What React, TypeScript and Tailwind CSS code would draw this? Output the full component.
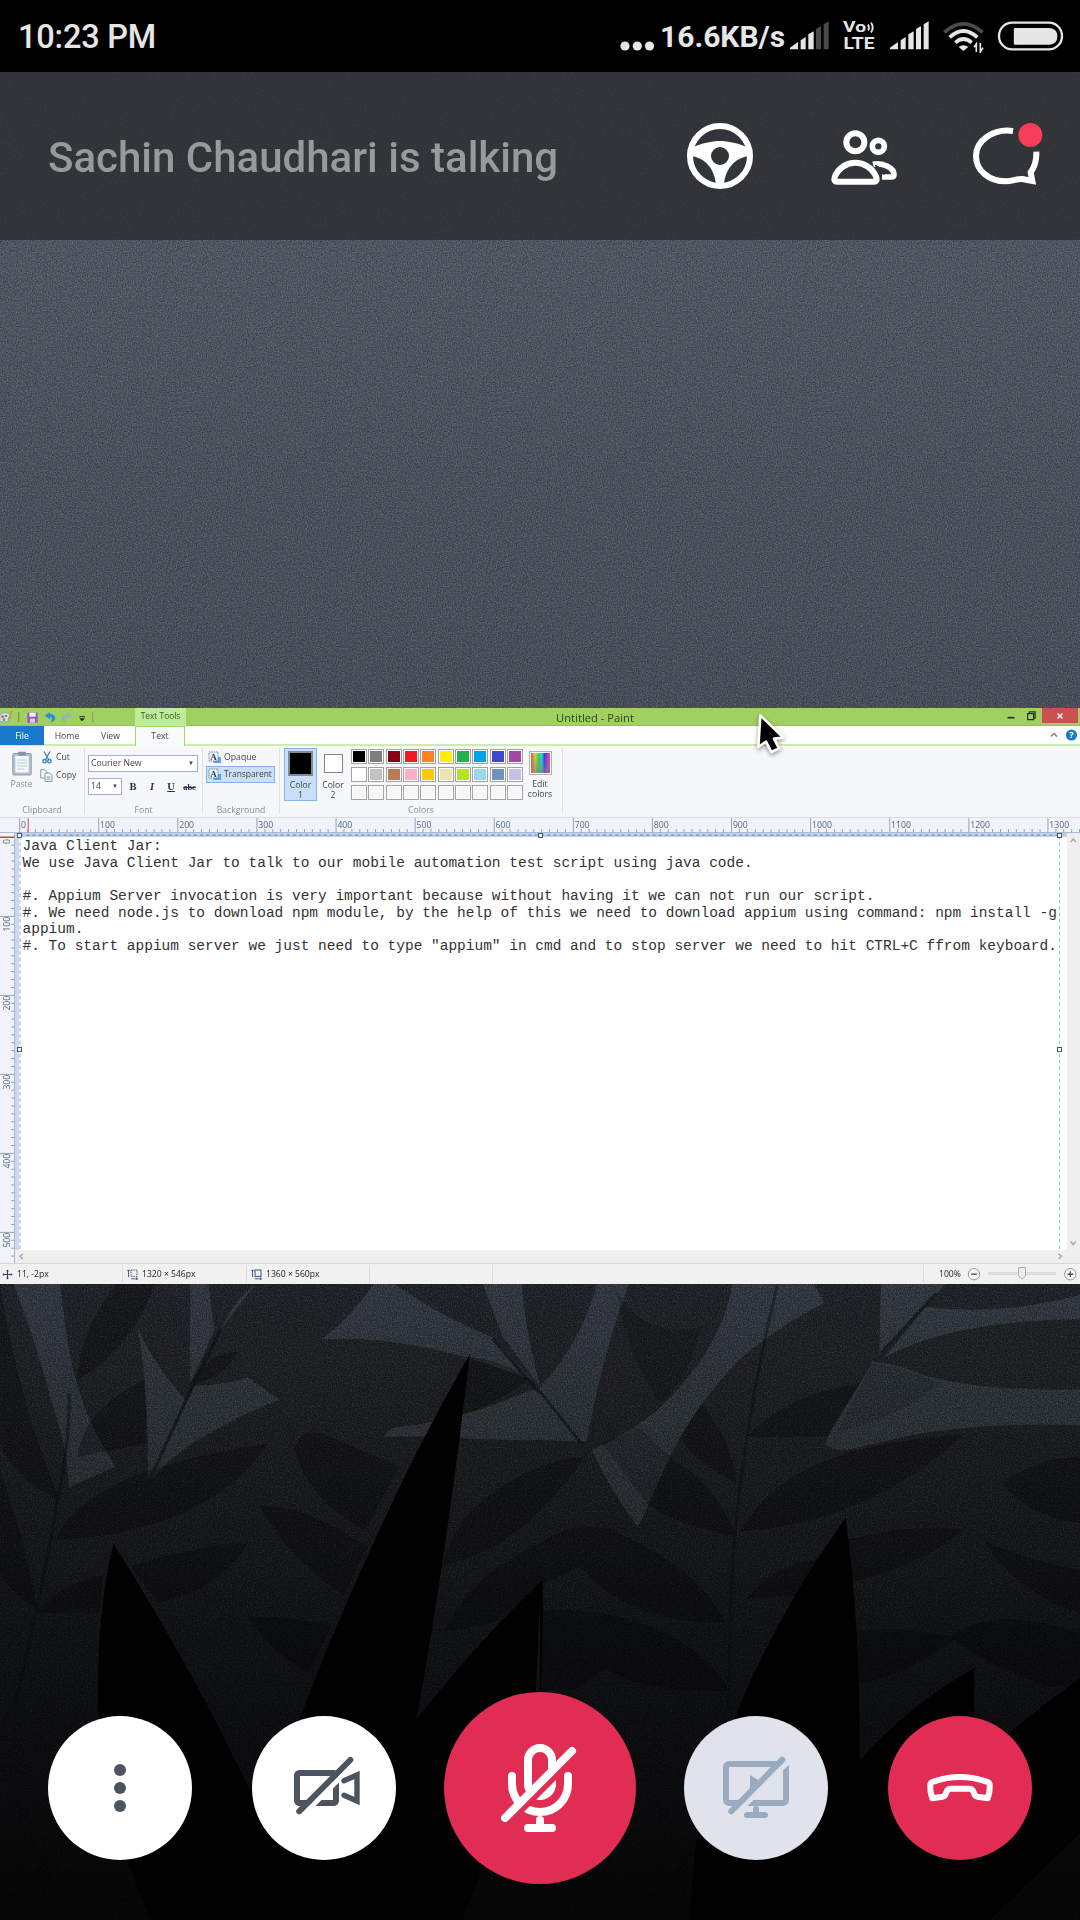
import React from 'react';

const UI = "font-['Open_Sans','Noto_Sans',sans-serif]";

/* ---------- status bar ---------- */

function Signal({ dim }: { dim?: boolean }) {
  const weak = dim ? '#4a4a4a' : '#e6e6e6';
  return (
    <svg className="h-[30px] w-[41px]" viewBox="570 62 123 90">
      <g fill="#e6e6e6">
        <path d="M573 147 L573 142 L597 125 V147Z" />
        <path d="M605 147 V120 L620 110 V147Z" />
        <path d="M628 147 V102 L644 93 V147Z" />
        <path d="M651 147 V86 L666 77 V147Z" fill={weak} />
        <path d="M674 147 V72 L689 63 V147Z" fill={weak} />
      </g>
    </svg>
  );
}

function StatusBar() {
  return (
    <div className="flex h-[72px] items-center justify-between bg-black pl-[18px] pr-4 font-['Roboto',sans-serif] text-[#e6e6e6]">
      <span className="mt-[2px] text-[32.5px] leading-none font-medium tracking-[-0.2px]">10:23 PM</span>
      <div className="flex items-center">
        <svg className="mt-[19px] mr-[5px] h-[10px] w-[35px]" viewBox="0 0 35 10" fill="#e6e6e6">
          <circle cx="5" cy="5" r="4.6" />
          <circle cx="17.3" cy="5" r="4.6" />
          <circle cx="29.5" cy="5" r="4.6" />
        </svg>
        <span className="mt-[2px] mr-[5px] w-[124px] text-[30px] leading-none font-bold whitespace-nowrap">16.6KB/s</span>
        <Signal dim />
        <svg className="ml-[13px] h-[38px] w-[34px]" viewBox="0 -4 34 38" fill="#e6e6e6">
          <text x="0" y="11.4" fontFamily="Roboto" fontWeight="700" fontSize="15.5" textLength="23" lengthAdjust="spacingAndGlyphs">Vo</text>
          <text x="0.5" y="28.4" fontFamily="Roboto" fontWeight="700" fontSize="17" textLength="31" lengthAdjust="spacingAndGlyphs">LTE</text>
          <path d="M25 3.5 q2 3 0 6 M28 1.5 q3.4 5 0 10" fill="none" stroke="#e6e6e6" strokeWidth="1.8" />
        </svg>
        <span className="ml-[12px] flex"><Signal /></span>
        <svg className="ml-[13px] h-[33px] w-[41px]" viewBox="1030 60 123 99" fill="none" stroke="#e6e6e6" strokeWidth="11">
          <path d="M1034 97 Q1091 46 1149 97" stroke="#4a4a4a" />
          <path d="M1050 112 Q1091 74 1133 112" />
          <path d="M1067 128 Q1091 106 1116 128" />
          <path d="M1077 141 Q1091 130 1106 141 L1091 153Z" fill="#e6e6e6" stroke="none" />
          <path d="M1130 156 V132 L1123 142 M1142 129 V156 L1150 143" strokeWidth="5" />
        </svg>
        <svg className="ml-[13px] h-[30px] w-[67px]" viewBox="1192 63 201 91">
          <rect x="1197" y="68" width="191" height="81" rx="40" fill="none" stroke="#e6e6e6" strokeWidth="7" />
          <path d="M1242 88 Q1242 84 1246 84 H1350 Q1374 86 1374 109 Q1374 133 1350 135 H1246 Q1242 135 1242 131Z" fill="#e6e6e6" />
        </svg>
      </div>
    </div>
  );
}

/* ---------- call header ---------- */

function CallHeader() {
  return (
    <div className="flex h-[168px] items-center bg-[#282a2b]/75 pr-[37px] pl-[48px]">
      <span className="mt-1 flex-1 font-['Roboto',sans-serif] text-[42px] leading-none font-medium whitespace-nowrap text-[#98999b]">
        Sachin Chaudhari is talking
      </span>
      <svg className="h-[68px] w-[68px]" viewBox="-34 -34 68 68" fill="white">
        <circle r="30" fill="none" stroke="white" strokeWidth="6" />
        <path fillRule="evenodd" d="M-29 -8 C-18 -13 -8 -15 0 -15 S18 -13 29 -8 V0 C14 2 5 14 4 29 H-4 C-5 14 -14 2 -29 0Z M9 0 A9 9 0 1 0 -9 0 A9 9 0 1 0 9 0Z" />
      </svg>
      <svg className="ml-[76px] h-[68px] w-[68px]" viewBox="690 366 204 204" fill="none" stroke="white" strokeWidth="18">
        <circle cx="766" cy="427" r="27" />
        <circle cx="835" cy="439" r="18" strokeWidth="17" />
        <path d="M712 545 H821 Q833 545 829 532 C818 503 790 488 766 488 C742 488 714 503 704 532 Q700 545 712 545Z" />
        <path d="M819 493 C850 486 882 505 882 523 Q882 531 874 531 H846" strokeWidth="17" />
        <path d="M825 496 C840 504 850 516 852 524" strokeWidth="5" stroke="#323539" />
      </svg>
      <svg className="ml-[74px] h-[68px] w-[71px]" viewBox="1117 366 213 204" fill="none" stroke="white" strokeWidth="18">
        <path d="M1240 393 C1180 385 1129 422 1129 468 C1129 512 1168 544 1218 544 C1240 544 1254 535 1268 537 L1298 543 L1293 517 C1306 499 1311 480 1310 455" />
        <circle cx="1292" cy="405" r="36" fill="#f63d5a" stroke="none" />
      </svg>
    </div>
  );
}

/* ---------- shared Paint window ---------- */

function TitleBar() {
  return (
    <div className="flex h-[18px] border-b border-[#93c157] bg-[#a1d062]">
      <svg className="h-[18px] w-[135px]" viewBox="0 0 405 54">
        <g transform="translate(0 -24)">
          <path d="M0 44 Q15 32 30 44 Q36 60 22 65 H0Z" fill="#d8e6ef" stroke="#7d97a8" strokeWidth="2" />
          <circle cx="8" cy="50" r="4" fill="#d9534a" /><circle cx="18" cy="48" r="4" fill="#3e8ccc" /><circle cx="12" cy="59" r="4" fill="#47a15c" />
          <path d="M36 33 L24 62" stroke="#e08a3a" strokeWidth="5" />
          <path d="M56 37 V66" stroke="#6a8b3d" strokeWidth="3" />
          <rect x="82" y="38" width="31" height="30" fill="#8b5fb8" /><rect x="88" y="38" width="19" height="12" fill="#f1ecf6" /><rect x="90" y="56" width="15" height="12" fill="#d9cbe8" />
          <path d="M150 36 L134 47 L150 58 V51 Q160 52 152 68 Q176 58 160 44 Q156 41 150 42Z" fill="#2a8fd8" />
          <path d="M200 36 L216 47 L200 58 V51 Q190 52 198 68 Q174 58 190 44 Q194 41 200 42Z" fill="#8fb8a5" />
          <path d="M238 50 H255" stroke="#222" strokeWidth="3" /><path d="M238 55 H255 L246 64Z" fill="#222" />
          <path d="M278 37 V66" stroke="#6a8b3d" strokeWidth="2" />
        </g>
      </svg>
      <div className="h-[19px] w-[51px] bg-[#beed98] text-center text-[8.4px] leading-[16px] whitespace-nowrap text-[#3d5425]">Text Tools</div>
      <div className="flex-1 text-center text-[11.2px] leading-[19px] whitespace-nowrap text-[#32401f]">
        <span className="pl-[4px]">Untitled - Paint</span>
      </div>
      <svg className="h-[18px] w-[42px]" viewBox="0 0 42 18" fill="none" stroke="#26331a" strokeWidth="1.2">
        <path d="M7.5 9.7 H14.5" strokeWidth="1.6" />
        <path d="M27.6 5.6 h6 v6 h-6z M29.4 5.4 V3.8 H35.2 V9.8 H33.6" />
      </svg>
      <div className="flex h-[15px] w-[36px] items-center justify-center bg-[#ca5150]">
        <svg className="h-[6px] w-[6px]" viewBox="0 0 6 6" stroke="white" strokeWidth="1.4"><path d="M.5 .5 L5.5 5.5 M5.5 .5 L.5 5.5" /></svg>
      </div>
      <div className="w-[2px]" />
    </div>
  );
}

function TabRow() {
  return (
    <div className="flex h-[20px] border-b-2 border-[#c8f0ab] bg-white text-[8.7px] leading-[20px] text-[#444]">
      <div className="h-[19px] w-[44px] bg-[#1979ca] text-center text-white">File</div>
      <div className="w-[46px] text-center">Home</div>
      <div className="w-[45px] pr-1 text-center">View</div>
      <div className="h-[20px] w-[50px] border-x border-t border-[#9be065] bg-[#f7f9fb] text-center leading-[18px]">Text</div>
      <div className="flex-1" />
      <svg className="h-[18px] w-[32px]" viewBox="0 0 32 18" fill="none">
        <path d="M3 10.5 L6 7.5 L9 10.5" stroke="#777" strokeWidth="1.3" />
        <circle cx="23.5" cy="9" r="5.6" fill="#1979ca" />
        <text x="23.5" y="12.4" textAnchor="middle" fontSize="9.5" fontWeight="700" fill="white">?</text>
      </svg>
    </div>
  );
}

function Group({ label, className, children }: { label: string; className: string; children: React.ReactNode }) {
  return (
    <div className={`relative flex flex-col ${className}`}>
      <div className="h-[57px]">{children}</div>
      <div className="pr-[1px] text-center text-[8.7px] leading-[14px] text-[#8a8d91]">{label}</div>
      <div className="absolute top-[2px] right-0 h-[66px] w-px bg-[#dfe2e6]" />
    </div>
  );
}

function PatternIcon() {
  return (
    <svg className="h-[13px] w-[14px]" viewBox="0 0 14 13">
      <path d="M7 6 H13 V12 H5Z" fill="#58a7ea" />
      <rect x="1" y="1" width="9" height="9" fill="#eef4fa" stroke="#4b6076" strokeWidth=".8" strokeDasharray="1.4 1" />
      <text x="5.4" y="9" fontSize="9" fontWeight="700" fontFamily="Liberation Serif" textAnchor="middle" fill="#1f3550">A</text>
    </svg>
  );
}

const PALETTE = [
  ['#000000', '#7f7f7f', '#880015', '#ed1c24', '#ff7f27', '#fff200', '#22b14c', '#00a2e8', '#3f48cc', '#a349a4'],
  ['#ffffff', '#c3c3c3', '#b97a57', '#ffaec9', '#ffc90e', '#efe4b0', '#b5e61d', '#99d9ea', '#7092be', '#c8bfe7'],
  ['#f6f7f9', '#f6f7f9', '#f6f7f9', '#f6f7f9', '#f6f7f9', '#f6f7f9', '#f6f7f9', '#f6f7f9', '#f6f7f9', '#f6f7f9'],
];

function Ribbon() {
  return (
    <div className="flex h-[72px] border-b border-[#dadde2] bg-[#f5f7f9] text-[8.7px] text-[#444]">
      <Group label="Clipboard" className="w-[85px]">
        <div className="flex">
          <div className="flex w-[40px] flex-col items-center pt-[5px] pl-[3px] leading-[14px] text-[#8b8e92]">
            <svg className="h-[25px] w-[20px]" viewBox="0 0 20 25">
              <rect x=".8" y="2.5" width="18.4" height="21.5" rx="1" fill="#b3bfcd" stroke="#8f9db0" />
              <rect x="3.3" y="5" width="13.4" height="16.5" fill="#f3f6fa" />
              <path d="M5 9 H15 M5 12 H15 M5 15 H15 M5 18 H12" stroke="#c3ccd7" />
              <rect x="6" y=".8" width="8" height="4" rx="1" fill="#8593a6" />
            </svg>
            <span className="mt-px">Paste</span>
          </div>
          <div className="flex flex-col pt-[3px] leading-[15px]">
            <div className="flex h-[17px] items-center">
              <svg className="mr-[3px] ml-[1px] h-[13px] w-[12px]" viewBox="0 0 12 13" fill="none">
                <path d="M3 0.5 L7.5 8.5 M9 0.5 L4.5 8.5" stroke="#6d8297" strokeWidth="1.4" />
                <circle cx="3.6" cy="10.2" r="1.7" stroke="#2d86c9" strokeWidth="1.4" /><circle cx="8.4" cy="10.2" r="1.7" stroke="#2d86c9" strokeWidth="1.4" />
              </svg>
              Cut
            </div>
            <div className="flex h-[18px] items-center">
              <svg className="mr-[3px] h-[13px] w-[13px]" viewBox="0 0 13 13" fill="#f8fafc" stroke="#7c8c9e" strokeWidth=".9">
                <path d="M.8 .8 H5 L7 2.8 V9 H.8Z" /><path d="M5 4 H9.5 L12 6.5 V12.4 H5Z" /><path d="M6.6 8 H10.4 M6.6 10 H10.4" stroke="#4b91cf" />
              </svg>
              Copy
            </div>
          </div>
        </div>
      </Group>
      <Group label="Font" className="w-[118px]">
        <div className="pt-[9px] pl-[3px]">
          <div className="flex h-[17px] w-[110px] items-center justify-between border border-[#9fb2cc] bg-white pr-[3px] pl-[2px]">
            Courier New<span className="text-[6px]">▼</span>
          </div>
          <div className="mt-[6px] flex items-center">
            <div className="flex h-[17px] w-[34px] items-center justify-between border border-[#9fb2cc] bg-white pr-[3px] pl-[2px]">
              14<span className="text-[6px]">▼</span>
            </div>
            <div className="flex font-['Liberation_Serif',serif] text-[10.5px] leading-[16px] font-bold text-[#1f3048]">
              <span className="w-[22px] text-center">B</span>
              <span className="w-[16px] text-center italic">I</span>
              <span className="w-[22px] text-center underline">U</span>
              <span className="w-[15px] text-center text-[8.5px] line-through">abc</span>
            </div>
          </div>
        </div>
      </Group>
      <Group label="Background" className="w-[77px]">
        <div className="pt-[3px] pl-[3px]">
          <div className="flex h-[17px] items-center gap-[2px] pl-[2px]"><PatternIcon />Opaque</div>
          <div className="flex h-[17px] w-[69px] items-center gap-[2px] border border-[#7fb5e8] bg-[#c9e0f8] pl-[1px] text-[8.4px]"><PatternIcon />Transparent</div>
        </div>
      </Group>
      <Group label="Colors" className="w-[283px]">
        <div className="flex leading-[10px]">
          <div className="mt-[2px] ml-[4px] flex h-[53px] w-[33px] flex-col items-center border border-[#7fb5e8] bg-[#c9e0f8] pt-[2px] text-center">
            <div className="mb-[4px] h-[25px] w-[25px] border-2 border-[#7e8a98] bg-black" />
            <span>Color</span><span>1</span>
          </div>
          <div className="mt-[8px] flex w-[32px] flex-col items-center text-center">
            <div className="mb-[7px] h-[19px] w-[19px] border border-[#858585] bg-white" />
            <span>Color</span><span>2</span>
          </div>
          <div className="mt-[3px] ml-[2px] grid w-[172px] grid-cols-10 gap-x-[1.4px] gap-y-[2px]">
            {PALETTE.flat().map((c, i) => (
              <div key={i} className="h-[15.4px] border border-[#a3a3a3] bg-white p-px">
                <div className="h-full w-full" style={{ backgroundColor: c }} />
              </div>
            ))}
          </div>
          <div className="mt-[5px] flex w-[32px] flex-col items-center pl-[2px] text-center">
            <div className="mb-[4px] h-[24px] w-[23px] border border-[#b0b0b0] bg-white p-px">
              <div className="h-full w-full bg-linear-[90deg,#e8543e,#e8d53e_22%,#22e040_40%,#22dcf0_55%,#2a30f0_72%,#e028e0_88%,#e0407a]">
                <div className="h-full w-full bg-linear-to-b from-transparent to-[#808080b0]" />
              </div>
            </div>
            <span>Edit</span><span>colors</span>
          </div>
        </div>
      </Group>
    </div>
  );
}

const range = (n: number) => Array.from({ length: n }, (_, i) => i);

function HorizontalRuler() {
  return (
    <svg className="block h-[15px] w-[1080px] bg-[#f0f3f9]" viewBox="0 0 1080 15">
      {range(135).map((i) => (
        <rect key={i} x={19.2 + i * 7.91} y={i % 10 ? 11 : 0} width="0.9" height={i % 10 ? 4 : 15} fill="#8d9cb5" />
      ))}
      {range(14).map((i) => (
        <text key={i} x={21 + i * 79.1} y="10" fontSize="8.7" fill="#53657f">{i * 100}</text>
      ))}
      <rect x="27.6" y="0" width="1.4" height="15" fill="#f0757a" />
      <rect x="0" y="14.2" width="1080" height="1" fill="#9fb0ca" />
    </svg>
  );
}

function VerticalRuler() {
  return (
    <svg className="block h-[430px] w-[15px] bg-[#f0f3f9]" viewBox="0 833 15 430">
      {range(54).map((i) => (
        <rect key={i} x={i % 10 ? 11 : 0} y={836.9 + i * 7.9} width={i % 10 ? 4 : 15} height="0.9" fill="#8d9cb5" />
      ))}
      {range(6).map((i) => (
        <text key={i} transform={`translate(9.6 ${(i ? 852.6 : 844) + i * 79}) rotate(-90)`} fontSize="8.7" fill="#53657f">{i * 100}</text>
      ))}
      <rect x="0" y="836.6" width="15" height="1.2" fill="#f01c24" />
      <rect x="14.1" y="833" width="0.9" height="430" fill="#9fb0ca" />
    </svg>
  );
}

const NOTES = [
  'Java Client Jar:',
  'We use Java Client Jar to talk to our mobile automation test script using java code.',
  '',
  '#. Appium Server invocation is very important because without having it we can not run our script.',
  '#. We need node.js to download npm module, by the help of this we need to download appium using command: npm install -g',
  'appium.',
  '#. To start appium server we just need to type "appium" in cmd and to stop server we need to hit CTRL+C ffrom keyboard.',
];

function Handle({ className }: { className: string }) {
  return <div className={`absolute h-[5px] w-[5px] border border-[#44566e] bg-white ${className}`} />;
}

function Canvas() {
  return (
    <div className="flex h-[430px]">
      <VerticalRuler />
      <div className="flex flex-1 flex-col bg-[#efefef]">
        <div className="flex h-[417px]">
          <div className="relative w-[1052px] border-t-4 border-l-4 border-t-[#c3cfe2] border-l-[#cbdaf0] bg-white">
            <svg className="absolute -top-1 left-0 h-[417px] w-[1048px]" viewBox="0 0 1048 417" fill="none" stroke="#8bbcf0">
              <path d="M1 2.2 H1041" strokeWidth="1.6" strokeDasharray="3.2 3" stroke="#6da6e4" />
              <path d="M1 3 V417" strokeDasharray="3.4 3" stroke="#8fa9cc" /><path d="M1040.5 3 V417" strokeDasharray="3.4 3" />
            </svg>
            <Handle className="top-[-4px] left-[-2px]" />
            <Handle className="top-[-4px] left-[519px]" />
            <Handle className="top-[-4px] left-[1038px]" />
            <Handle className="top-[210px] left-[-2px]" />
            <Handle className="top-[210px] left-[1038px]" />
            <div className="pt-[1px] pl-[3.5px] font-['Liberation_Mono',monospace] text-[14.49px] leading-[16.65px] whitespace-pre text-[#333]">
              {NOTES.map((line, i) => <div key={i} className="h-[16.65px]">{line}</div>)}
            </div>
          </div>
          <svg className="h-[417px] w-[13px]" viewBox="0 0 13 417" fill="none" stroke="#a9a9a9" strokeWidth="1.5">
            <path d="M3.6 9 L6.2 6 L8.8 9 M3.6 408.5 L6.2 411.5 L8.8 408.5" />
          </svg>
        </div>
        <svg className="h-[13px] w-[1065px]" viewBox="15 0 1065 13" fill="none" stroke="#a9a9a9" strokeWidth="1.5">
          <path d="M23 3.7 L20 6.3 L23 8.9 M1058.5 3.7 L1061.5 6.3 L1058.5 8.9" />
        </svg>
      </div>
    </div>
  );
}

function StatusCell({ className, children }: { className: string; children?: React.ReactNode }) {
  return <div className={`my-px flex items-center border-r border-[#dcdcdc] ${className}`}>{children}</div>;
}

function SizeIcon({ dashed }: { dashed?: boolean }) {
  return (
    <svg className="mr-[4px] ml-[4px] h-[11px] w-[11px]" viewBox="0 0 11 11" fill="none" stroke="#3d5370">
      <path d="M1.5 1 V8 M0 2.4 L1.5 .8 L3 2.4 M4 9.8 H10.5 M9 8.4 L10.5 9.8 L9 11" strokeWidth=".9" />
      <rect x="4" y="1" width="6" height="6.4" strokeDasharray={dashed ? '1.4 1' : undefined} />
    </svg>
  );
}

function PaintStatusBar() {
  return (
    <div className="flex h-[21px] border-t border-[#d6d6d6] bg-[#f1f1f1] text-[8.6px] text-[#222]">
      <StatusCell className="w-[123px]">
        <svg className="mr-[4px] ml-[2px] h-[11px] w-[11px]" viewBox="0 0 11 11" stroke="#2b4263" fill="#2b4263"><path d="M5.5 1 V10 M1 5.5 H10" strokeWidth="1.1" /><path d="M5.5 .4 L7 2.2 H4Z M5.5 10.6 L7 8.8 H4Z M.4 5.5 L2.2 4 V7Z M10.6 5.5 L8.8 4 V7Z" stroke="none" /></svg>
        11, -2px
      </StatusCell>
      <StatusCell className="w-[124px]"><SizeIcon dashed />1320 × 546px</StatusCell>
      <StatusCell className="w-[123px]"><SizeIcon />1360 × 560px</StatusCell>
      <StatusCell className="w-[123px]" />
      <StatusCell className="w-[431px]" />
      <div className="flex flex-1 items-center pl-[15px]">
        <span className="w-[28px]">100%</span>
        <svg className="h-[18px] w-[113px]" viewBox="967 0 113 18" fill="none" stroke="#555">
          <circle cx="974" cy="9.2" r="5.7" fill="#fafafa" stroke="#8a8a8a" strokeWidth=".9" /><path d="M971.2 9.2 H976.8" strokeWidth="1.5" />
          <rect x="988.5" y="7.5" width="67" height="2" fill="#e4e4e4" stroke="#cfcfcf" strokeWidth=".6" />
          <path d="M1018.7 2.5 H1025.5 V11 L1022.1 14 L1018.7 11Z" fill="#eee" stroke="#a5a5a5" strokeWidth=".9" />
          <circle cx="1070.3" cy="9.2" r="5.7" fill="#fafafa" stroke="#8a8a8a" strokeWidth=".9" /><path d="M1067.3 9.2 H1073.3 M1070.3 6.2 V12.2" strokeWidth="1.4" />
        </svg>
      </div>
    </div>
  );
}

function PaintWindow() {
  return (
    <div className={`relative h-[576px] overflow-hidden bg-white ${UI}`}>
      <TitleBar />
      <TabRow />
      <Ribbon />
      <HorizontalRuler />
      <Canvas />
      <PaintStatusBar />
      <svg className="absolute top-[2px] left-[753px] h-[56px] w-[36px] drop-shadow-[0_2px_2px_#0006]" viewBox="582 36 108 168">
        <path d="M604 52 L598 147 L621 131 L637 162 L660 151 L645 122 L673 119Z" fill="#000" stroke="#fff" strokeWidth="8" strokeLinejoin="round" />
      </svg>
    </div>
  );
}

/* ---------- wallpaper ---------- */

const LEFT_LIGHT = [
  'M40 42 H175 Q195 240 225 350 Q260 470 335 590 L200 652 Q195 520 150 400 Q110 230 40 42Z',
  'M400 175 Q450 290 540 392 L430 640 Q430 480 425 400 Q420 290 400 175Z',
  'M552 42 H605 L622 180 Q590 260 552 340Z',
  'M742 42 Q680 90 640 182 Q690 110 742 42Z',
  'M565 348 Q660 345 720 322 L812 390 Q680 440 560 520 Q490 565 430 640 V500 L500 475 L540 400Z',
  'M1085 42 H1145 Q1280 140 1435 205 L1545 330 Q1430 285 1330 255 Q1180 215 1050 207 L935 208 Q1030 130 1085 42Z',
  'M1402 42 H1515 Q1525 160 1545 250 L1568 350 L1545 320 L1460 200Z',
  'M1115 500 Q1130 470 1165 470 Q1350 450 1540 360 H1570 V510 Q1400 512 1280 498Z',
];

const RIGHT_LIGHT = [
  'M165 42 H258 Q200 200 160 390 L135 515 L0 510 V350 Q120 220 165 42Z',
  'M560 42 H795 L825 98 Q640 200 550 300 Q430 440 370 575 L285 772 Q210 670 150 540 Q330 460 430 320 Q530 200 560 42Z',
  'M990 42 H1178 L1130 95 L1000 245 L985 258Z',
  'M1120 110 Q1330 140 1568 75 V148 Q1200 150 1000 262Z',
  'M965 275 Q1040 280 1120 318 Q1300 365 1568 358 V466 Q1300 455 1080 495 L900 538 Q850 545 828 522 Q850 470 930 340Z',
];

const LEFT_SHADE = [
  'M160 810 Q250 600 780 520 Q600 790 160 810Z',
  'M380 890 Q550 830 720 820 Q650 950 460 1000Z',
  'M855 540 Q870 460 960 500 Q1090 560 1160 590 L1060 780 Q900 700 855 540Z',
  'M750 705 Q900 710 1065 830 L1000 975 Q850 880 750 705Z',
  'M720 1040 Q860 1040 965 1065 L895 1210 Q790 1150 720 1040Z',
  'M105 1028 Q180 940 300 915 L290 1028Z',
  'M1285 885 Q1330 690 1568 590 V720 Q1450 850 1285 885Z',
  'M1290 1085 Q1370 910 1568 820 V945 L1430 1060Z',
  'M0 42 Q60 420 175 690 Q50 640 0 520Z',
  'M225 330 Q230 180 340 42 H450 Q380 240 225 330Z',
  'M0 910 Q0 700 0 600 Q70 800 110 1020 Q40 980 0 910Z',
  'M550 340 Q600 250 690 245 Q660 320 550 345Z',
  'M225 560 Q240 420 420 330 L425 520 Q340 540 225 560Z',
  'M1360 260 Q1450 270 1540 325 Q1430 410 1345 430Z',
];

const RIGHT_SHADE = [
  'M580 785 Q720 520 1230 495 Q950 760 580 785Z',
  'M570 800 Q380 760 310 700 L380 565 Q510 640 570 800Z',
  'M540 1058 Q250 1060 120 890 L0 945 V820 Q130 730 250 800 Q460 900 540 1058Z',
  'M0 590 Q60 565 130 560 Q80 640 0 720Z',
  'M0 1020 Q400 1010 550 1262 Q300 1270 190 1195 L100 1260 H0Z',
  'M600 500 Q720 370 930 340 L830 500Z',
  'M570 640 Q430 560 410 500 L470 400 Q560 520 570 640Z',
  'M600 985 Q700 870 820 870 L740 980Z',
  'M890 810 Q1080 760 1230 780 Q1100 890 905 935Z',
  'M1290 810 Q1400 870 1568 900 V1030 Q1370 960 1290 810Z',
  'M920 1080 Q1060 1070 1190 1100 Q1330 1000 1568 1090 V1240 L1480 1250 Q1330 1200 1200 1110 Q1060 1220 925 1240Z',
  'M1340 640 Q1450 560 1568 560 V760 Q1420 740 1340 640Z',
];

const LIGHT_VEINS = 'M640 180 L545 380 L430 640 M1430 205 L1568 370';

function Wallpaper() {
  const left = 'translate(0 1270) scale(.34439 .33333)';
  const right = 'translate(540 1270) scale(.34439 .33333)';
  return (
    <svg className="absolute inset-0 h-[1920px] w-[1080px]" viewBox="0 0 1080 1920">
      <defs>
        <linearGradient id="sky" x1="0" y1="0" x2="0" y2="1">
          <stop offset="0" stopColor="#505863" /><stop offset="1" stopColor="#464d58" />
        </linearGradient>
        <linearGradient id="ground" x1="0" y1="0" x2="0" y2="1">
          <stop offset="0" stopColor="#1f2226" /><stop offset=".3" stopColor="#18191b" /><stop offset=".6" stopColor="#0e0f11" /><stop offset="1" stopColor="#050506" />
        </linearGradient>
        <linearGradient id="leaf" gradientUnits="userSpaceOnUse" x1="0" y1="0" x2="0" y2="700">
          <stop offset="0" stopColor="#31373e" /><stop offset="1" stopColor="#25292d" />
        </linearGradient>
        <filter id="grain" x="0" y="0" width="100%" height="100%" colorInterpolationFilters="sRGB">
          <feTurbulence type="fractalNoise" baseFrequency="0.8" numOctaves="2" seed="4" />
          <feColorMatrix values="1.6 0 0 0 -0.3  1.6 0 0 0 -0.3  1.6 0 0 0 -0.3  0 0 0 0 1" />
        </filter>
      </defs>
      <rect y="72" width="1080" height="640" fill="url(#sky)" />
      <rect y="1280" width="1080" height="640" fill="url(#ground)" />
      <g transform={left}>
        {LEFT_LIGHT.map((d) => <path key={d} d={d} fill="url(#leaf)" />)}
        {LEFT_SHADE.map((d) => <path key={d} d={d} fill="#000" fillOpacity=".28" />)}
        <path d={LIGHT_VEINS} fill="none" stroke="#0d0f11" strokeWidth="9" strokeOpacity=".7" />
        <path d="M200 370 Q205 500 165 700 Q130 930 40 1310" fill="none" stroke="#08090a" strokeWidth="9" strokeOpacity=".5" />
      </g>
      <g transform={right}>
        {RIGHT_LIGHT.map((d) => <path key={d} d={d} fill="url(#leaf)" />)}
        {RIGHT_SHADE.map((d) => <path key={d} d={d} fill="#000" fillOpacity=".28" />)}
        <path d="M220 60 Q300 210 470 170 Q430 330 350 400 Q260 280 220 60Z" fill="#000" fillOpacity=".18" />
        <path d="M965 280 Q1060 290 1160 340 Q1050 440 860 490Z" fill="#000" fillOpacity=".14" />
        <path d="M180 520 L290 475 L380 560 L310 700Z" fill="#000" fillOpacity=".2" />
        <path d="M0 365 L120 520 M1150 70 L990 250" fill="none" stroke="#0a0c0e" strokeWidth="9" strokeOpacity=".6" />
        <path d="M690 42 Q600 420 565 800 Q550 1000 548 1320" fill="none" stroke="#08090a" strokeWidth="9" strokeOpacity=".4" />
      </g>
      <g transform={left} fill="#010101">
        <path d="M330 822 Q280 1020 285 1320 Q290 1600 440 1955 H1340 Q1400 1800 1550 1400 L1570 935 Q1400 1100 1208 1350 Q1290 900 1365 250 Q1200 550 1080 830 Q950 1120 870 1350 L725 1560 Q560 1200 330 822Z" />
      </g>
      <g transform={right} fill="#010101">
        <path d="M887 745 Q700 1010 570 1330 Q430 1650 440 1955 H1300 L1568 1690 V1225 Q1400 1350 1260 1480 V1195 Q1080 1300 928 1470 Q930 1050 887 745Z" />
        <path d="M0 935 H8 Q10 1100 0 1300Z" />
      </g>
      <rect y="72" width="1080" height="1848" filter="url(#grain)" opacity=".38" style={{ mixBlendMode: 'soft-light' }} />
    </svg>
  );
}

/* ---------- call controls ---------- */

function Round({ className, children }: { className: string; children: React.ReactNode }) {
  return (
    <div className={`flex shrink-0 items-center justify-center rounded-full ${className}`}>
      <svg className="h-[96px] w-[96px]" viewBox="-48 -48 96 96" fill="none">{children}</svg>
    </div>
  );
}

function Controls() {
  return (
    <div className="flex items-center justify-between px-[48px]">
      <Round className="h-[144px] w-[144px] bg-white">
        <g fill="#4c545f"><circle cy="-18" r="6" /><circle r="6" /><circle cy="18" r="6" /></g>
      </Round>
      <Round className="h-[144px] w-[144px] bg-white">
        <g stroke="#4c545f" strokeWidth="6">
          <rect x="-27" y="-15" width="39" height="30" rx="2.5" />
          <path d="M27.5 -21.5 L-24 30" stroke="white" strokeWidth="5" />
          <path d="M20 -7.2 L33 -13 V13 L20 7.2" strokeWidth="5.4" strokeLinecap="round" />
          <path d="M26.3 -28 L-24.8 23.3" strokeLinecap="round" />
        </g>
      </Round>
      <Round className="mx-[-12px] h-[192px] w-[192px] bg-[#e12d53]">
        <g stroke="white" strokeWidth="8">
          <rect x="-12" y="-40" width="24" height="48" rx="12" />
          <path d="M-28 -12 V-4 A28 28 0 0 0 28 -4 V-12" strokeLinecap="round" />
          <path d="M0 32 V40 M-12 40 H12" strokeLinecap="round" />
          <path d="M36.5 -32.3 L-29 33.2" stroke="#e12d53" strokeWidth="5.4" />
          <path d="M32 -37 L-35 30" strokeLinecap="round" />
        </g>
      </Round>
      <Round className="h-[144px] w-[144px] bg-[#e0e3eb]">
        <g stroke="#9aabc0" strokeWidth="6">
          <rect x="-30" y="-24" width="60" height="39" rx="3" />
          <path d="M-6 -13 L9 -4 L-6 5Z" fill="#9aabc0" stroke="none" />
          <path d="M0 21 V26 M-9 27 H9" strokeLinecap="round" />
          <path d="M37 -31 L-24 30" stroke="#e0e3eb" strokeWidth="5" />
          <path d="M26.3 -28.3 L-24.8 23.3" strokeLinecap="round" />
        </g>
      </Round>
      <Round className="h-[144px] w-[144px] bg-[#e12d53]">
        <path d="M-27.8 10.3 Q-30 4 -29.8 -3 Q-29.5 -5.5 -26.5 -6.3 Q0 -15.5 26.5 -6.3 Q29.5 -5.5 29.8 -3 Q30 4 27.8 10.3 L17.5 8.8 Q14.8 8.3 13.8 4.5 Q12.5 .7 9.5 .7 H-9.5 Q-12.5 .7 -13.8 4.5 Q-14.8 8.3 -17.5 8.8Z" stroke="white" strokeWidth="6" strokeLinejoin="round" />
      </Round>
    </div>
  );
}

export default function App() {
  return (
    <div className="relative h-[1920px] w-[1080px] overflow-hidden bg-black">
      <Wallpaper />
      <div className="relative flex h-full flex-col">
        <StatusBar />
        <CallHeader />
        <div className="h-[468px]" />
        <PaintWindow />
        <div className="flex flex-1 flex-col justify-end pb-[36px]">
          <Controls />
        </div>
      </div>
    </div>
  );
}
